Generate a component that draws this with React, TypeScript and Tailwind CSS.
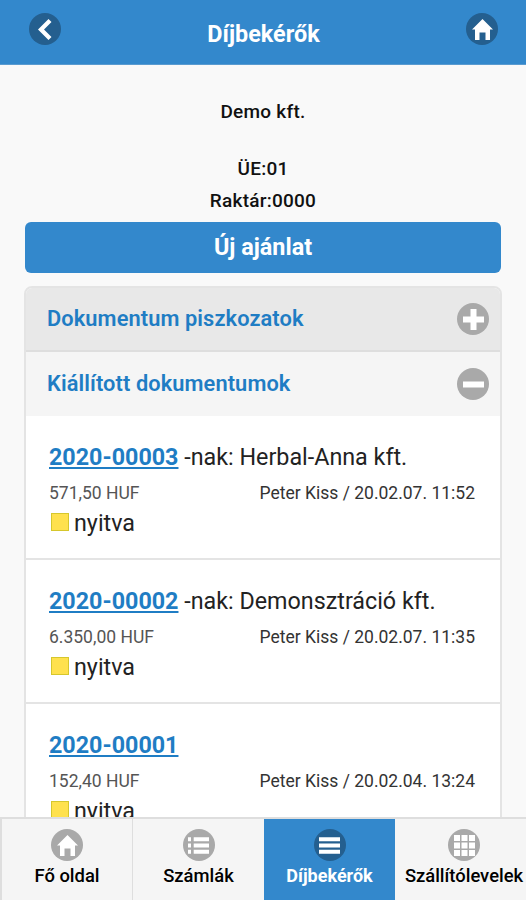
import React from 'react';

const paths = {
  back: 'M11 2 9 0 2 7l7 7 2-2-5-5z',
  home: 'M7 0 0 7h2v7h3V9h4v5h3V7h2z',
  plus: 'M14 5H9V0H5v5H0v4h5v5h4V9h5z',
  minus: 'M0 5h14v4H0z',
  bars: 'M0 1.5h14v2.7H0zM0 5.65h14v2.7H0zM0 9.8h14v2.7H0z',
  bullets:
    'M0 1.5h2v2.7H0zM3.8 1.5H14v2.7H3.8zM0 5.65h2v2.7H0zM3.8 5.65H14v2.7H3.8zM0 9.8h2v2.7H0zM3.8 9.8H14v2.7H3.8z',
  grid: 'M0 0h4v4H0zM5 0h4v4H5zM10 0h4v4h-4zM0 5h4v4H0zM5 5h4v4H5zM10 5h4v4h-4zM0 10h4v4H0zM5 10h4v4H5zM10 10h4v4h-4z',
};

type IconName = keyof typeof paths;

function DiscIcon({ name, dark = false }: { name: IconName; dark?: boolean }) {
  return (
    <span
      className={`flex h-8 w-8 shrink-0 items-center justify-center rounded-full ${
        dark ? 'bg-[#245f8f]' : 'bg-[#a9a9a9]'
      }`}
    >
      <svg viewBox="0 0 14 14" className="h-[21px] w-[21px]" fill="#fff">
        <path d={paths[name]} />
      </svg>
    </span>
  );
}

const documents = [
  { id: '2020-00003', partner: '-nak: Herbal-Anna kft.', amount: '571,50 HUF', meta: 'Peter Kiss / 20.02.07. 11:52' },
  { id: '2020-00002', partner: '-nak: Demonsztráció kft.', amount: '6.350,00 HUF', meta: 'Peter Kiss / 20.02.07. 11:35' },
  { id: '2020-00001', partner: '', amount: '152,40 HUF', meta: 'Peter Kiss / 20.02.04. 13:24' },
];

const tabs: { label: string; icon: IconName; width: string }[] = [
  { label: 'Fő oldal', icon: 'home', width: 'w-[133px] border-l-2 border-r' },
  { label: 'Számlák', icon: 'bullets', width: 'w-[131px]' },
  { label: 'Díjbekérők', icon: 'bars', width: 'w-[131px]' },
  { label: 'Szállítólevelek', icon: 'grid', width: 'w-[138px]' },
];

export default function App() {
  return (
    <div className="flex h-[900px] w-[526px] flex-col overflow-hidden bg-[#f9f9f9] font-['Roboto',sans-serif] text-[#222]">
      <header className="flex h-[65px] shrink-0 justify-between border-b border-[#5a9bd0] bg-[#3388cc] pt-[13px] pr-7 pl-[29px] text-white">
        <DiscIcon name="back" dark />
        <h1 className="pt-[6px] text-[23.4px] leading-[30px] font-bold">Díjbekérők</h1>
        <DiscIcon name="home" dark />
      </header>

      <main className="min-h-0 flex-1 overflow-hidden px-6 pt-[31px]">
        <div className="text-center text-[19px] leading-8 font-medium tracking-[0.25px] text-[#111]">
          <p>Demo kft.</p>
          <p className="mt-[25px]">ÜE:01</p>
          <p>Raktár:0000</p>
        </div>

        <button className="mx-px mt-[5px] block h-[51px] w-[476px] rounded-[6px] bg-[#3388cc] pt-px text-[23.4px] font-bold text-white">
          Új ajánlat
        </button>

        <section className="mt-[13px] overflow-hidden rounded-t-lg border-2 border-[#e4e4e4] bg-white">
          <h2 className="flex h-[64px] items-center justify-between border-b-2 border-[#dedede] bg-[#e8e8e8] pr-[11px] pl-[21px] text-[21.8px] font-semibold tracking-[0.1px] text-[#1f7dc4]">
            <span className="pt-px">Dokumentum piszkozatok</span>
            <DiscIcon name="plus" />
          </h2>
          <h2 className="flex h-[64px] items-center justify-between bg-[#f5f5f5] pr-[11px] pl-[21px] text-[21.8px] font-semibold tracking-[0.1px] text-[#1f7dc4]">
            <span className="pt-px">Kiállított dokumentumok</span>
            <DiscIcon name="minus" />
          </h2>
          {documents.map((doc) => (
            <article key={doc.id} className="h-[144px] border-b-2 border-[#e4e4e4] pt-[25px] pr-[25px] pl-[23px]">
              <div className="text-[23.3px] leading-8">
                <a className="font-bold text-[#1f7dc4] underline decoration-2 underline-offset-2">{doc.id}</a> {doc.partner}
              </div>
              <div className="mt-[8px] flex justify-between text-[17.5px] leading-6">
                <span className="text-[#555]">{doc.amount}</span>
                <span className="text-[#333]">{doc.meta}</span>
              </div>
              <div className="mt-[2px] flex items-center gap-[5px] pl-0.5 text-[23.3px] leading-8">
                <span className="mb-0.5 h-[18px] w-[18px] border border-[#d6c72c] bg-[#ffe14d]" />
                nyitva
              </div>
            </article>
          ))}
        </section>
      </main>

      <nav className="flex h-[83px] shrink-0 border-t-2 border-[#dedede] bg-[#f5f5f5]">
        {tabs.map((tab) => {
          const active = tab.label === 'Díjbekérők';
          return (
            <div
              key={tab.label}
              className={`flex shrink-0 flex-col items-center border-[#dedede] pt-[10px] leading-[30px] ${tab.width} ${
                active ? 'bg-[#3388cc] text-[18px] font-bold text-white' : 'text-[18.4px] font-medium text-black'
              }`}
            >
              <DiscIcon name={tab.icon} dark={active} />
              {tab.label}
            </div>
          );
        })}
      </nav>
    </div>
  );
}
